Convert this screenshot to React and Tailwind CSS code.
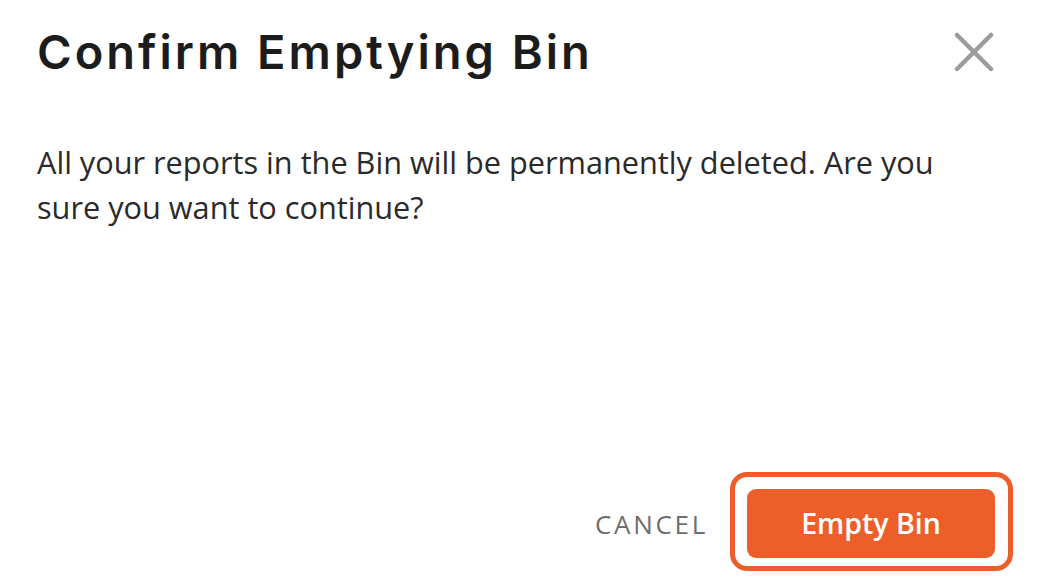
export default function App() {
  return (
    <div className="h-[582px] w-[1048px] bg-white flex flex-col pl-[37px] pr-[35px] pt-[22px] pb-[11px] overflow-hidden">
      {/* Header */}
      <div className="flex items-center justify-between">
        <h2 className="text-[47px] leading-[60px] font-semibold text-[#1c1c1c] tracking-[3px]" style={{ fontFamily: 'Inter, "Noto Sans", sans-serif' }}>
          Confirm Emptying Bin
        </h2>
        <button className="w-[40px] h-[40px] mr-[19px] flex items-center justify-center">
          <svg width="40" height="40" viewBox="0 0 40 40" fill="none" stroke="#9b9b9b" strokeWidth="4.5" strokeLinecap="round">
            <path d="M3 3 L37 37 M37 3 L3 37" />
          </svg>
        </button>
      </div>

      {/* Body */}
      <p className="mt-[58px] text-[30.7px] leading-[45px] text-[#2a2a2a] pr-[30px]" style={{ fontFamily: '"Open Sans", sans-serif' }}>
        All your reports in the Bin will be permanently deleted. Are you sure you want to continue?
      </p>

      {/* Footer */}
      <div className="mt-auto flex items-center justify-end gap-[22px]" style={{ fontFamily: '"Open Sans", sans-serif' }}>
        <button className="pt-[5px] text-[26px] tracking-[2.7px] text-[#6e6e6e] font-medium">CANCEL</button>
        <div className="border-[5px] border-[#ec5f2b] rounded-[17px] pt-[12px] pb-[8px] pl-[12px] pr-[13px]">
          <button className="w-[248px] h-[69px] rounded-[9px] bg-[#ec5f2b] text-white text-[28.5px] font-semibold">
            Empty Bin
          </button>
        </div>
      </div>
    </div>
  );
}
